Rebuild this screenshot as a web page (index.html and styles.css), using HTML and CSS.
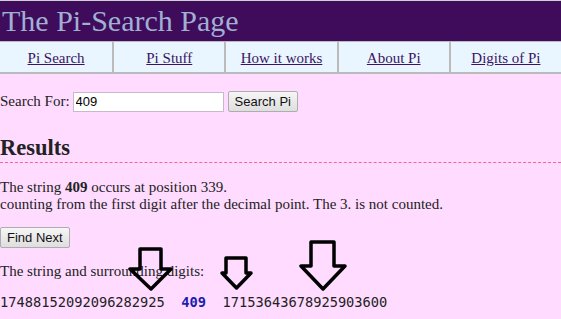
FILE: index.html
```html
<!DOCTYPE html>
<html lang="en">
<head>
  <meta charset="UTF-8" />
  <title>The Pi-Search Page</title>
  <link rel="stylesheet" href="styles.css">
</head>
<body>
  <!-- Page title -->
  <h1 class="title">The Pi-Search Page</h1>

  <!-- Menu -->
  <div class="menu">
    <div class="menu-cell"><a href="#">Pi Search</a></div>
    <div class="menu-cell"><a href="#">Pi Stuff</a></div>
    <div class="menu-cell"><a href="#">How it works</a></div>
    <div class="menu-cell"><a href="#">About Pi</a></div>
    <div class="menu-cell"><a href="#">Digits of Pi</a></div>
  </div>

  <!-- Search form -->
  <form class="search">
    <label for="searchInput">Search For:</label>
    <input type="text" id="searchInput" value="409"/>
    <button type="button" class="btn">Search Pi</button>
  </form>

  <h2 class="results-title">Results</h2>

  <p class="found">
    The string <b>409</b> occurs at position 339.<br>
    counting from the first digit after the decimal point. The 3. is not counted.
  </p>

  <button type="button" class="btn next">Find Next</button>

  <p class="around">The string and surrounding digits:</p>

  <div class="digits">17488152092096282925&nbsp;&nbsp;<span class="hit">409</span>&nbsp;&nbsp;17153643678925903600</div>

  <!-- Arrows drawn over the digits -->
  <svg class="arrows" width="561" height="319" viewBox="0 0 561 319">
    <polygon points="140,249 161,249 161,269 171,269 151,289 130,269 140,269"/>
    <polygon points="226,258 246,258 246,273 251,273 236.5,288 222,273 226,273"/>
    <polygon points="311,242 334,242 334,266 345,266 323,289 301,266 311,266"/>
  </svg>
</body>
</html>
```

FILE: styles.css
```css
/* Base */
body {
  margin: 0;
  background-color: #ffdcff;
  font-family: "Liberation Serif", "Times New Roman", serif;
  font-size: 15px;
  color: #222;
  position: relative;
  min-height: 319px;
}

/* Title bar */
.title {
  margin: 0;
  height: 40px;
  line-height: 40px;
  padding-left: 2px;
  border-top: 1px solid #d0d0d0;
  background-color: #3f0b5b;
  color: #9fb0d3;
  font-size: 30px;
  font-weight: normal;
}

/* Menu row */
.menu {
  display: grid;
  grid-template-columns: repeat(5, 1fr);
  border-top: 1px solid #bbb;
  border-bottom: 2px solid #bbb;
  background-color: #eaf6ff;
}

.menu-cell {
  text-align: center;
  height: 30px;
  line-height: 32px;
  border-left: 2px solid #bbb;
}
.menu-cell:first-child {
  border-left: none;
}

.menu-cell a {
  color: #3a1460;
}

/* Search form */
.search {
  display: flex;
  align-items: center;
  margin-top: 17px;
}

#searchInput {
  width: 145px;
  height: 16px;
  margin: 0 4px 0 3px;
  padding: 1px 2px;
  border: 1px solid #c8b8c8;
  font-family: "Liberation Sans", Arial, sans-serif;
  font-size: 13px;
}

.btn {
  font-family: "Liberation Sans", Arial, sans-serif;
  font-size: 13px;
  color: #111;
  padding: 2px 6px;
  height: 21px;
  border: 1px solid #adadad;
  border-radius: 2px;
  background: linear-gradient(#f6f6f6, #dedede);
}

/* Results */
.results-title {
  margin: 23px 0 0 0;
  font-size: 22.5px;
  line-height: 26px;
  padding-bottom: 1px;
  border-bottom: 1px dashed #f06a88;
}

.found {
  margin: 16px 0 0 0;
  line-height: 17px;
}

.next {
  margin-top: 14px;
  height: 21px;
}

.around {
  margin: 15px 0 0 0;
}

.digits {
  margin-top: 14px;
  font-family: "DejaVu Sans Mono", monospace;
  font-size: 13.7px;
  white-space: nowrap;
}

.hit {
  color: #1c1cb0;
  font-weight: bold;
}

/* Arrow overlay */
.arrows {
  position: absolute;
  top: 0;
  left: 0;
  pointer-events: none;
}
.arrows polygon {
  fill: none;
  stroke: #000;
  stroke-width: 3.5;
  stroke-linejoin: round;
}
```
